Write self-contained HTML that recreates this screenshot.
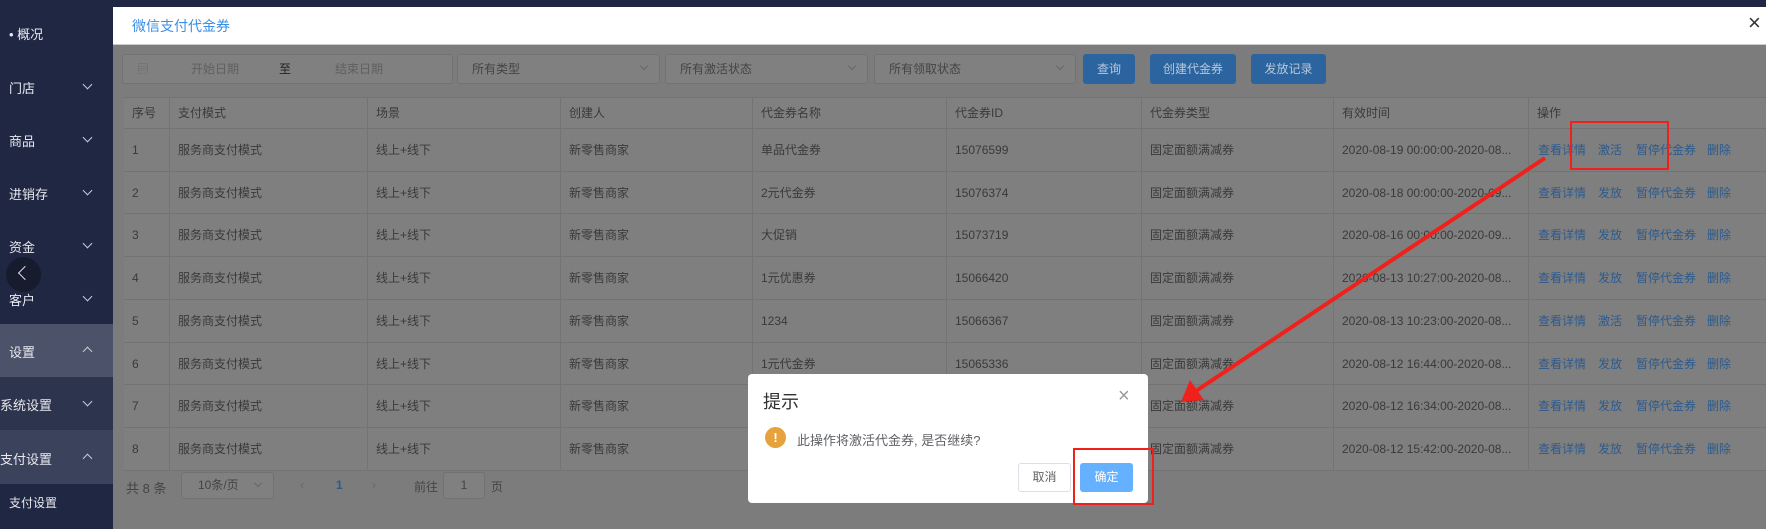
<!DOCTYPE html>
<html><head><meta charset="utf-8"><style>
*{margin:0;padding:0;box-sizing:border-box}
body{width:1766px;height:529px;overflow:hidden;position:relative;background:#7c7c7c;font-family:"Liberation Sans","Noto Sans CJK SC",sans-serif;font-size:12px;color:#3c3c3c}
.a{position:absolute}
.sb{left:0;top:0;width:113px;height:529px;background:#1f2743}
.si{position:absolute;left:0;width:113px;color:#e8e8ee;font-size:13px}
.si span{position:absolute;left:9px}
.chev{position:absolute;left:84px;width:7px;height:7px;border-right:1.5px solid #c8ccd6;border-bottom:1.5px solid #c8ccd6}
.dn{transform:rotate(45deg)}
.up{transform:rotate(-135deg)}
.row{position:absolute;left:124px;width:1642px;height:43px;border-top:1px solid #737373;background:#7f7f7f}
.c{position:absolute;top:0;height:100%;line-height:42px;border-left:1px solid #747474;padding-left:8px;white-space:nowrap;color:#3a3a3a}
.lk{position:absolute;color:#2c5a8e;line-height:42px}
.inp{position:absolute;top:54px;height:30px;border:1px solid #727272;border-radius:3px;background:#808080;line-height:28px;color:#444;padding-left:14px}
.inp i{position:absolute;right:12px;top:8px;width:6px;height:6px;border-right:1px solid #666;border-bottom:1px solid #666;transform:rotate(45deg)}
.btn{position:absolute;top:54px;height:30px;background:#2c64a0;color:#b9c8da;border-radius:3px;text-align:center;line-height:30px}
</style></head><body>
<div class="a" style="left:0;top:0;width:1766px;height:7px;background:#1f2743"></div>
<div class="a sb"></div>
<div class="si" style="top:24px"><span>• 概况</span></div>
<div class="si" style="top:78px"><span style="left:9px">门店</span><i class="chev dn" style="top:3px"></i></div>
<div class="si" style="top:131px"><span>商品</span><i class="chev dn" style="top:3px"></i></div>
<div class="si" style="top:184px"><span>进销存</span><i class="chev dn" style="top:3px"></i></div>
<div class="si" style="top:237px"><span>资金</span><i class="chev dn" style="top:3px"></i></div>
<div class="a" style="left:6px;top:257px;width:35px;height:35px;border-radius:50%;background:#161c2e"></div>
<div class="a" style="left:20px;top:268px;width:10px;height:10px;border-left:1.5px solid #ddd;border-bottom:1.5px solid #ddd;transform:rotate(45deg)"></div>
<div class="si" style="top:290px"><span>客户</span><i class="chev dn" style="top:3px"></i></div>
<div class="a" style="left:0;top:324px;width:113px;height:53px;background:#4b5269"></div>
<div class="si" style="top:342px"><span>设置</span><i class="chev up" style="top:6px"></i></div>
<div class="a" style="left:0;top:377px;width:113px;height:53px;background:#2d344e"></div>
<div class="si" style="top:395px"><span style="left:0">系统设置</span><i class="chev dn" style="top:3px"></i></div>
<div class="a" style="left:0;top:430px;width:113px;height:54px;background:#3b425b"></div>
<div class="si" style="top:449px"><span style="left:0">支付设置</span><i class="chev up" style="top:6px"></i></div>
<div class="si" style="top:494px;font-size:12px"><span>支付设置</span></div>

<div class="a" style="left:113px;top:7px;width:1653px;height:38px;background:#fff;border-bottom:1px solid #ccc"></div>
<div class="a" style="left:132px;top:16px;color:#3a8ee6;font-size:14px">微信支付代金券</div>
<div class="a" style="left:1748px;top:10px;font-size:22px;color:#333;line-height:26px">×</div>

<div class="inp" style="left:122px;width:331px;color:#5f5f5f"><span style="color:#6a6a6a">▤</span><span style="margin-left:42px">开始日期</span><span style="margin-left:40px;color:#222">至</span><span style="margin-left:44px">结束日期</span></div>
<div class="inp" style="left:457px;width:203px">所有类型<i></i></div>
<div class="inp" style="left:665px;width:203px">所有激活状态<i></i></div>
<div class="inp" style="left:874px;width:202px">所有领取状态<i></i></div>
<div class="btn" style="left:1083px;width:52px">查询</div>
<div class="btn" style="left:1150px;width:86px">创建代金券</div>
<div class="btn" style="left:1251px;width:75px">发放记录</div>

<div class="row" style="top:97px;height:31px;background:#808080">
<div class="c" style="left:0;border-left:none;line-height:30px">序号</div><div class="c" style="left:45px;line-height:30px">支付模式</div><div class="c" style="left:243px;line-height:30px">场景</div><div class="c" style="left:436px;line-height:30px">创建人</div><div class="c" style="left:628px;line-height:30px">代金券名称</div><div class="c" style="left:822px;line-height:30px">代金券ID</div><div class="c" style="left:1017px;line-height:30px">代金券类型</div><div class="c" style="left:1209px;line-height:30px">有效时间</div><div class="c" style="left:1404px;line-height:30px">操作</div>
</div>
<div id="rows"></div>
<script>
var d=[["单品代金券","15076599","2020-08-19 00:00:00-2020-08...","激活"],["2元代金券","15076374","2020-08-18 00:00:00-2020-09...","发放"],["大促销","15073719","2020-08-16 00:00:00-2020-09...","发放"],["1元优惠券","15066420","2020-08-13 10:27:00-2020-08...","发放"],["1234","15066367","2020-08-13 10:23:00-2020-08...","激活"],["1元代金券","15065336","2020-08-12 16:44:00-2020-08...","发放"],["","","2020-08-12 16:34:00-2020-08...","发放"],["","","2020-08-12 15:42:00-2020-08...","发放"]];
var h="";
for(var i=0;i<8;i++){var t=128+i*42.7;var r=d[i];
h+='<div class="row" style="top:'+t+'px"><div class="c" style="left:0;border-left:none">'+(i+1)+'</div><div class="c" style="left:45px">服务商支付模式</div><div class="c" style="left:243px">线上+线下</div><div class="c" style="left:436px">新零售商家</div><div class="c" style="left:628px">'+r[0]+'</div><div class="c" style="left:822px">'+r[1]+'</div><div class="c" style="left:1017px">固定面额满减券</div><div class="c" style="left:1209px">'+r[2]+'</div><div class="c" style="left:1404px"></div><span class="lk" style="left:1414px">查看详情</span><span class="lk" style="left:1474px">'+r[3]+'</span><span class="lk" style="left:1512px">暂停代金券</span><span class="lk" style="left:1583px">删除</span></div>';}
document.getElementById("rows").innerHTML=h;
</script>
<div class="a" style="left:124px;top:470px;width:1642px;height:1px;background:#737373"></div>
<div class="a" style="left:126px;top:478px;color:#444;font-size:13px">共 8 条</div>
<div class="inp" style="left:181px;top:472px;width:93px;height:27px;line-height:25px;padding-left:16px">10条/页<i style="top:7px"></i></div>
<div class="a" style="left:300px;top:478px;color:#666">‹</div>
<div class="a" style="left:336px;top:478px;color:#2c5a8e;font-weight:bold">1</div>
<div class="a" style="left:372px;top:478px;color:#666">›</div>
<div class="a" style="left:414px;top:478px;color:#444">前往</div>
<div class="inp" style="left:443px;top:472px;width:42px;height:27px;line-height:25px;text-align:center;padding:0">1</div>
<div class="a" style="left:491px;top:478px;color:#444">页</div>

<div class="a" style="left:748px;top:374px;width:400px;height:129px;background:#fff;border-radius:4px"></div>
<div class="a" style="left:763px;top:388px;font-size:18px;color:#303133">提示</div>
<div class="a" style="left:1118px;top:385px;font-size:20px;color:#999">×</div>
<div class="a" style="left:765px;top:427px;width:21px;height:21px;border-radius:50%;background:#e6a23c;color:#fff;text-align:center;line-height:21px;font-weight:bold;font-size:13px">!</div>
<div class="a" style="left:797px;top:430px;font-size:13px;color:#606266">此操作将激活代金券, 是否继续?</div>
<div class="a" style="left:1018px;top:463px;width:53px;height:29px;border:1px solid #dcdfe6;border-radius:3px;text-align:center;line-height:27px;color:#606266">取消</div>
<div class="a" style="left:1080px;top:463px;width:53px;height:29px;background:#66b1ff;border-radius:3px;text-align:center;line-height:29px;color:#fff">确定</div>

<div class="a" style="left:1570px;top:121px;width:99px;height:49px;border:2px solid #f0201a"></div>
<div class="a" style="left:1073px;top:448px;width:81px;height:57px;border:2px solid #f0201a"></div>
<svg class="a" style="left:0;top:0" width="1766" height="529"><line x1="1545" y1="158" x2="1196" y2="391" stroke="#f0201a" stroke-width="4"/><polygon points="1181,402 1190,380 1204,400" fill="#f0201a"/></svg>
</body></html>
